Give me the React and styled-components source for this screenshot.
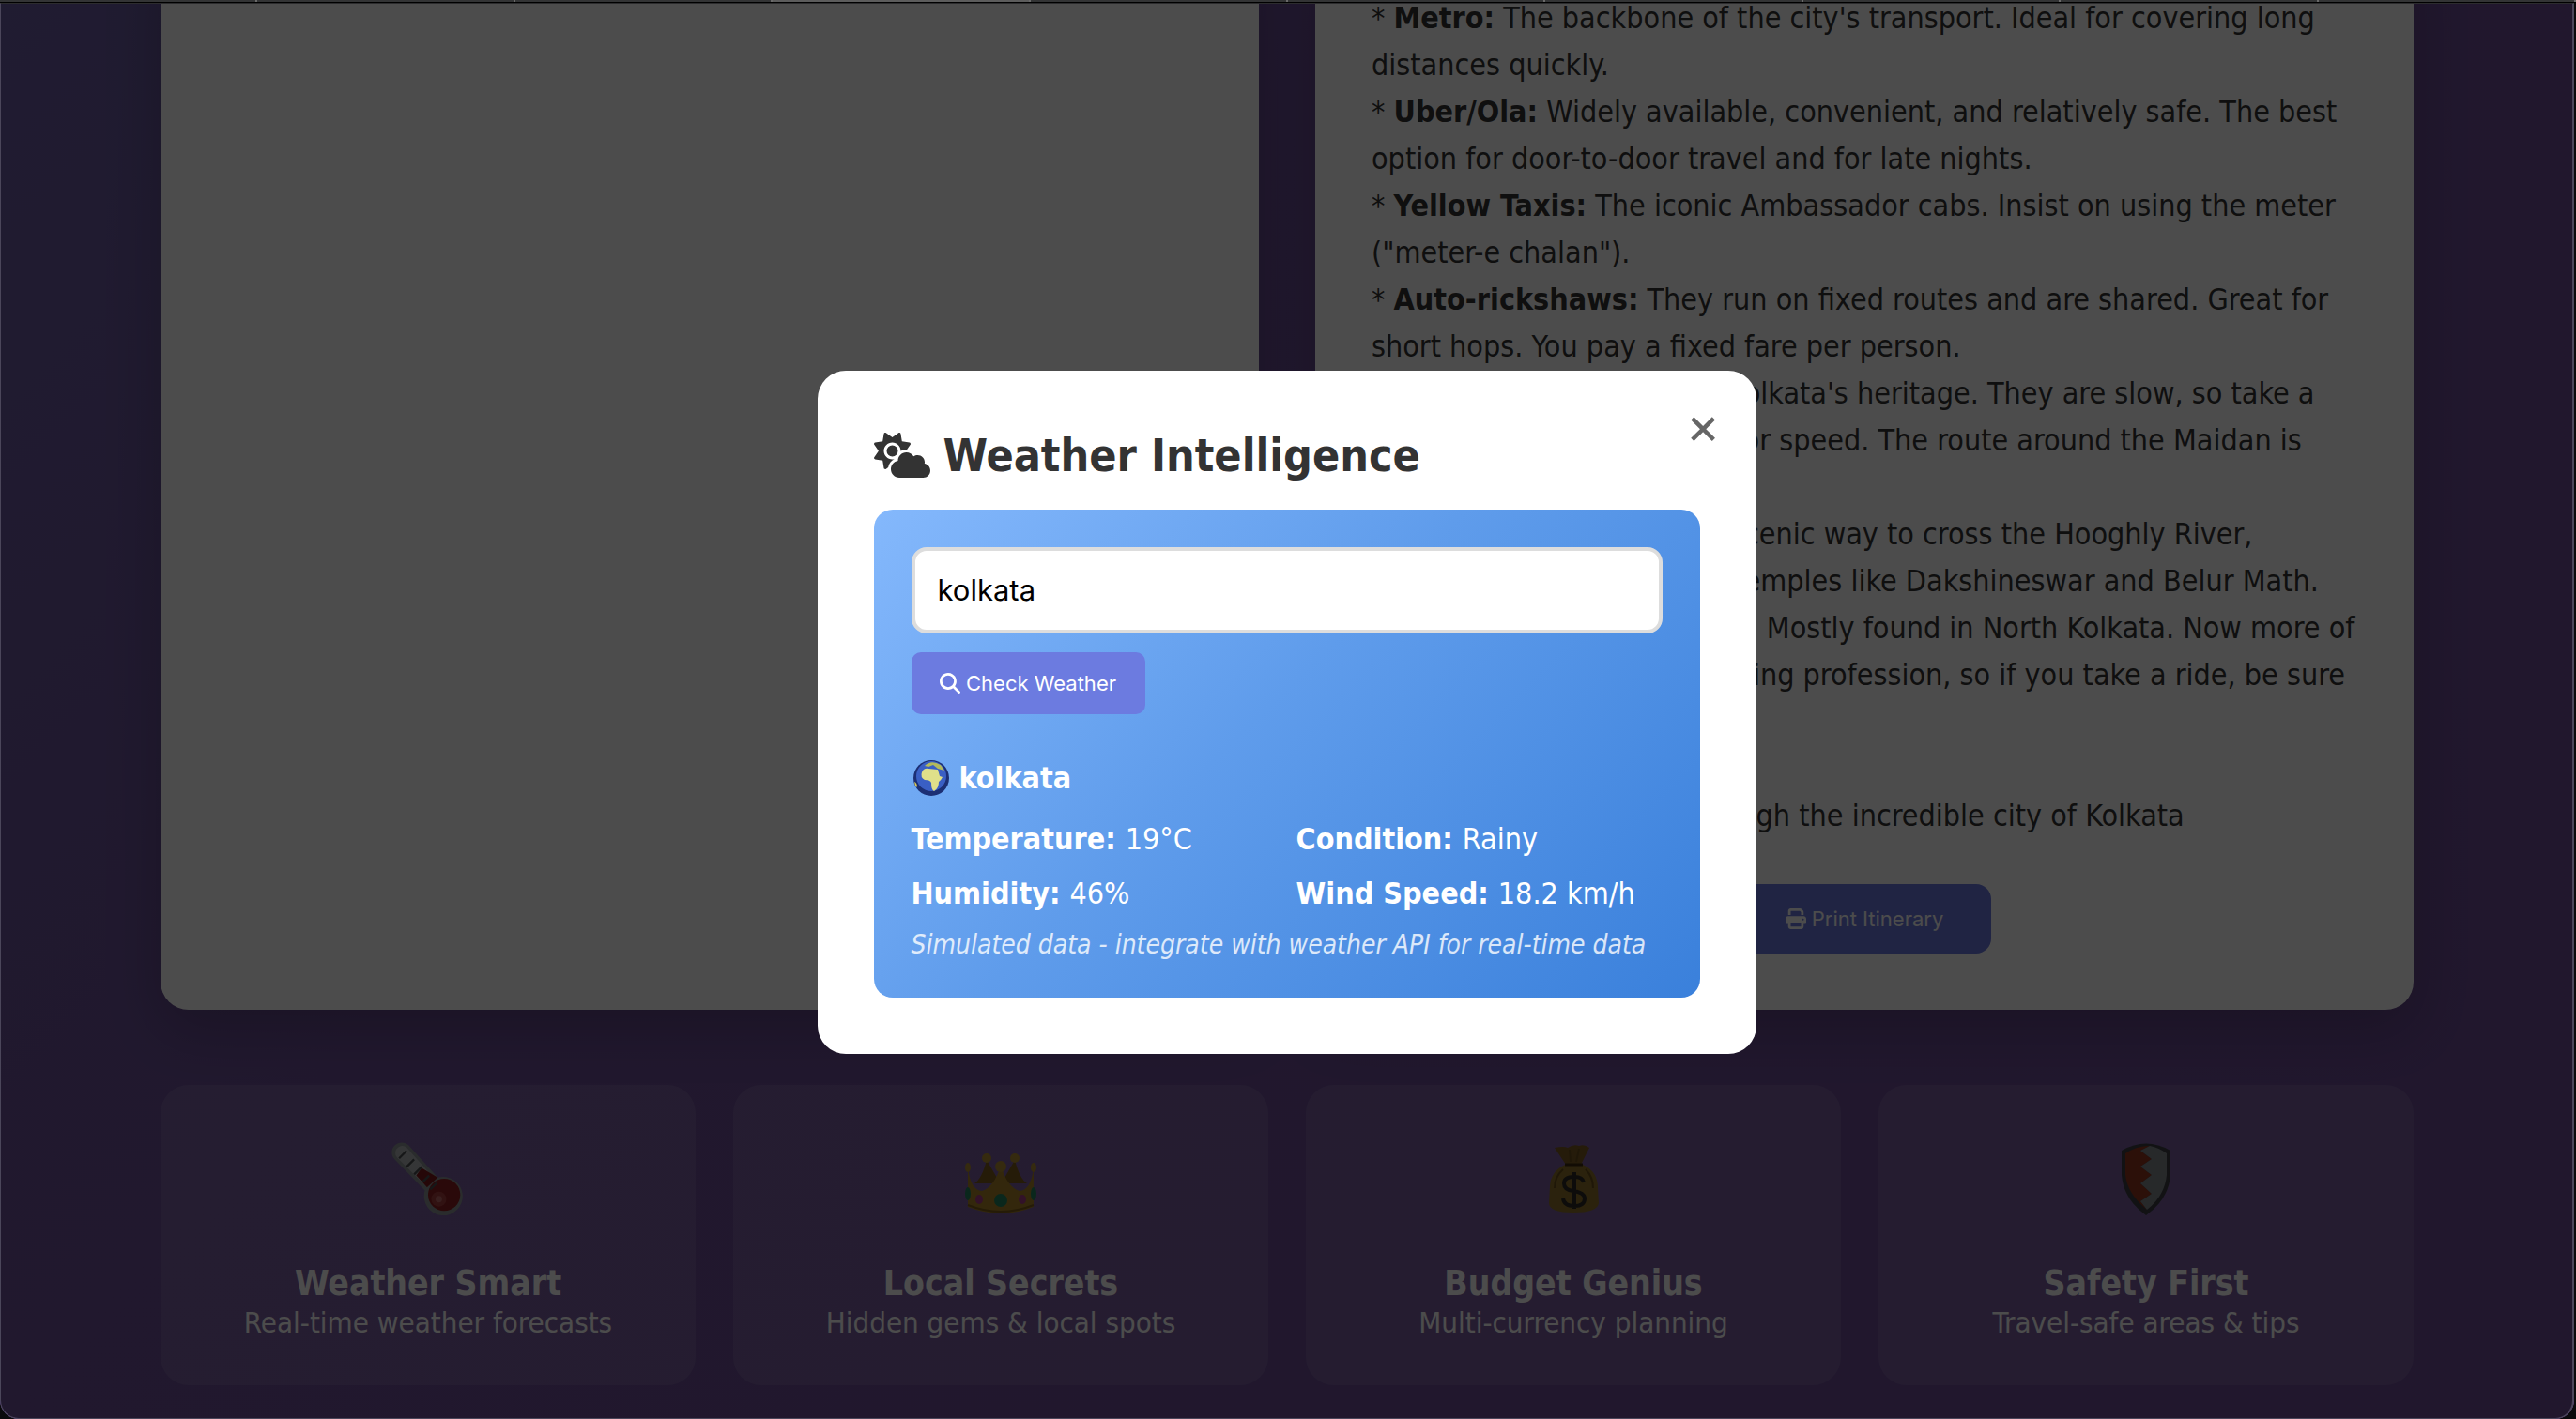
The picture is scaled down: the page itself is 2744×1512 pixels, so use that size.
import React from "react";
import styled, { createGlobalStyle } from "styled-components";
import { FaCloudSun, FaMagnifyingGlass, FaPrint } from "react-icons/fa6";

const textFont = `"DejaVu Sans Condensed", "Noto Sans", sans-serif`;
const controlFont = `Inter, "Liberation Sans", sans-serif`;

const GlobalStyle = createGlobalStyle`
  *, *::before, *::after { box-sizing: border-box; }
  html, body { margin: 0; background: #000; }
  h2, h3, h4, p, dl, dt, dd { margin: 0; }
  button, input { font-family: ${controlFont}; }
`;

const Window = styled.div`
  display: flex;
  flex-direction: column;
  height: 100vh;
  overflow: hidden;
  background: #0a0a0c;
  font-family: ${textFont};
  font-size: 32px;
  line-height: 38px;
  color: #333;
`;

const TabStrip = styled.div`
  display: flex;
  flex: none;
  height: 3px;
  border-bottom: 1px solid #000;
  background: #333435;
`;

const Tab = styled.span`
  flex: 1;
  border-right: 2px solid #6a6a6a;
  background: ${(p) => (p.$active ? "#5c5c5c" : "transparent")};
`;

const Viewport = styled.div`
  position: relative;
  display: flex;
  flex: 1;
  flex-direction: column;
  justify-content: flex-end;
  min-height: 0;
  margin-right: 2px;
  padding-bottom: 36px;
  overflow: hidden;
  border-radius: 0 0 20px 20px;
  background: linear-gradient(135deg, #6b5ea4 0%, #6e5099 35%, #6e4d97 100%);
`;

const Container = styled.main`
  display: flex;
  flex-direction: column;
  gap: 80px;
  width: 100%;
  max-width: 2400px;
  margin: 0 auto;
`;

const Columns = styled.div`
  display: grid;
  grid-template-columns: 1fr 1fr;
  gap: 60px;
`;

const Card = styled.section`
  display: flex;
  flex-direction: column;
  gap: 48px;
  align-items: center;
  padding: 60px;
  border-radius: 30px;
  background: #fff;
  box-shadow: 0 20px 60px rgba(0, 0, 0, 0.2);
`;

const Itinerary = styled.div`
  width: 100%;
  line-height: 50px;
  white-space: pre;
`;

const Line = styled.p`
  min-height: 50px;
`;

const ActionButton = styled.button`
  display: flex;
  align-items: center;
  justify-content: center;
  gap: 6px;
  width: ${(p) => (p.$large ? "270px" : "249px")};
  height: ${(p) => (p.$large ? "74px" : "66px")};
  border: 0;
  border-radius: ${(p) => (p.$large ? "16px" : "10px")};
  background: #6c7be0;
  color: #fff;
  font-size: 22px;
`;

const Features = styled.div`
  display: grid;
  grid-template-columns: repeat(4, 1fr);
  gap: 40px;
`;

const Feature = styled.article`
  display: flex;
  flex-direction: column;
  align-items: center;
  height: 320px;
  padding: 60px 40px 0;
  border-radius: 30px;
  background: rgba(255, 255, 255, 0.1);
  color: #fff;
  svg { width: 80px; height: 80px; margin-bottom: 50px; }
`;

const FeatureTitle = styled.h3`
  font-size: 37px;
  line-height: 44px;
`;

const FeatureText = styled.p`
  font-size: 31px;
`;

const Overlay = styled.div`
  position: absolute;
  inset: 0;
  display: flex;
  align-items: center;
  justify-content: center;
  padding-top: 2px;
  border: 1px solid #4b465a;
  border-top-color: #2c2c2e;
  border-right-width: 2px;
  border-radius: 0 0 20px 20px;
  background: rgba(0, 0, 0, 0.7);
`;

const Modal = styled.div`
  position: relative;
  width: 1000px;
  max-width: 90%;
  padding: 60px;
  border-radius: 30px;
  background: #fff;
`;

const CloseButton = styled.button`
  position: absolute;
  top: 26px;
  right: 38px;
  padding: 0;
  border: 0;
  background: none;
  color: #666;
  font-size: 56px;
  line-height: 64px;
`;

const ModalTitle = styled.h2`
  display: flex;
  align-items: center;
  gap: 14px;
  margin-bottom: 28px;
  font-size: 48px;
  line-height: 60px;
  svg { width: 60px; height: 48px; }
`;

const WeatherCard = styled.div`
  padding: 40px;
  border-radius: 20px;
  background: linear-gradient(135deg, #84b8fc 0%, #5f9ceb 45%, #3a80db 100%);
  color: #fff;
`;

const CityInput = styled.input`
  display: block;
  width: 100%;
  height: 92px;
  margin-bottom: 20px;
  padding: 0 24px;
  border: 4px solid #ddd;
  border-radius: 16px;
  background: #fff;
  color: #000;
  font-size: 31px;
`;

const City = styled.h4`
  display: flex;
  align-items: center;
  gap: 11px;
  margin: 48px 0 26px;
  font-size: 32px;
  line-height: 40px;
  svg { width: 40px; height: 40px; }
`;

const Readings = styled.dl`
  display: grid;
  grid-template-columns: 1fr 1fr;
  gap: 20px;
  margin-bottom: 20px;
`;

const Reading = styled.div`
  display: flex;
  gap: 10px;
  white-space: nowrap;
  dt { font-weight: bold; }
`;

const Note = styled.p`
  font-size: 28px;
  line-height: 32px;
  font-style: italic;
  white-space: nowrap;
  opacity: 0.8;
`;

const Thermometer = () => (
  <svg viewBox="6 6 70 70" aria-hidden="true">
    <path d="M10 10 a9 9 0 0 1 13 0 L50 40 A18 18 0 1 1 38 52 L10 23 a9 9 0 0 1 0-13z" fill="#8d9496" />
    <path d="M13 12 a6 6 0 0 1 8 0 L47 41 L40 49 L12 21 a6 6 0 0 1 1-9z" fill="#b3b6b8" />
    <path d="M35 31 L30 38 L40 49 L50 40z" fill="#7d1a1c" />
    <circle cx="56" cy="56" r="15" fill="#8e2022" />
    <circle cx="51" cy="60" r="7" fill="#a53c3c" />
    <circle cx="51" cy="60" r="3" fill="#c06a6a" />
    <path d="M14 22l7-7M21 30l7-7M28 37l7-7M36 44l6-6M43 51l6-6" stroke="#4b4f53" strokeWidth="2" />
  </svg>
);

const Crown = () => (
  <svg viewBox="0 0 80 80" aria-hidden="true">
    <path d="M12 45 Q20 40 25 20 L40 46 L55 20 Q60 40 68 45z" fill="#7d5a1c" />
    <path d="M5 29 Q8 52 20 53 Q33 49 40 26 Q47 49 60 53 Q72 52 75 29 L75 70 Q40 84 5 70z" fill="#ab842a" />
    <path d="M5 68 Q40 82 75 68" fill="none" stroke="#7c5c18" strokeWidth="2" />
    <g fill="#b18c32">
      <ellipse cx="5" cy="28" rx="3" ry="5" />
      <ellipse cx="75" cy="28" rx="3" ry="5" />
      <circle cx="25" cy="18" r="5" />
      <circle cx="55" cy="18" r="5" />
      <circle cx="40" cy="27" r="6" />
    </g>
    <g fill="#23845f">
      <circle cx="40" cy="63" r="7" />
      <ellipse cx="5" cy="56" rx="3" ry="7" />
      <ellipse cx="75" cy="56" rx="3" ry="7" />
    </g>
    <g fill="#a83c86">
      <ellipse cx="17" cy="62" rx="4" ry="5" />
      <ellipse cx="63" cy="62" rx="4" ry="5" />
    </g>
  </svg>
);

const MoneyBag = () => (
  <svg viewBox="0 0 80 80" aria-hidden="true">
    <path d="M20 7 Q30 5 34 7 Q40 3 46 5 Q52 3 57 7 L48 25 H32z" fill="#7d5c22" />
    <path d="M31 25 H50 Q66 32 66 50 L67 66 Q66 76 40 76 Q14 76 14 66 L15 48 Q16 32 31 25z" fill="#8f742c" />
    <path d="M31 25 H50" stroke="#3c2a10" strokeWidth="3" />
    <path d="M36 9 L37 22 M46 8 L43 22 M29 30 Q20 38 20 50 M53 30 Q61 38 61 50" fill="none" stroke="#6a4e1c" strokeWidth="2" />
    <path d="M51 44 Q50 38 41 38 Q30 38 30 45 Q30 52 40 53 Q52 55 52 61 Q52 69 41 69 Q30 69 29 61 M41 33 V72" fill="none" stroke="#2e2a26" strokeWidth="4" />
  </svg>
);

const Shield = () => (
  <svg viewBox="0 0 80 80" aria-hidden="true">
    <path d="M14 10 Q40-5 66 10 V36 Q64 62 40 79 Q16 62 14 36z" fill="#3c3f44" />
    <path d="M18 13 Q30 5 44 5 L34 10 L46 19 L34 27 L46 36 L34 45 L46 56 L34 64 L41 73 Q20 56 18 36z" fill="#93361f" />
    <path d="M44 5 Q54 7 62 13 V36 Q60 58 41 73 L34 64 L46 56 L34 45 L46 36 L34 27 L46 19 L34 10z" fill="#84898e" />
  </svg>
);

const Globe = () => (
  <svg viewBox="0 0 40 40" aria-hidden="true">
    <circle cx="21" cy="20" r="19" fill="#1c2f74" />
    <circle cx="21" cy="18" r="16" fill="#3a5fc4" />
    <path d="M11 14 Q13 9 18 10 L28 11 L30 18 L33 19 Q31 23 29 24 Q29 31 24 34 Q21 33 21 25 Q20 22 14 22 Q9 19 11 14z" fill="#dfe08a" />
    <path d="M14 7 Q21 0 31 6 L35 12 L28 10 L23 6 L18 8z" fill="#b3b95c" />
    <path d="M3 24 Q6 25 6 30 L4 28z" fill="#d8c95a" />
  </svg>
);

const lines = [
  ["Metro:", " The backbone of the city's transport. Ideal for covering long"],
  ["", "distances quickly."],
  ["Uber/Ola:", " Widely available, convenient, and relatively safe. The best"],
  ["", "option for door-to-door travel and for late nights."],
  ["Yellow Taxis:", " The iconic Ambassador cabs. Insist on using the meter"],
  ["", "(\"meter-e chalan\")."],
  ["Auto-rickshaws:", " They run on fixed routes and are shared. Great for"],
  ["", "short hops. You pay a fixed fare per person."],
  ["Trams:", " A classic part of Kolkata's heritage. They are slow, so take a"],
  ["", "trip for the adventure, not for speed. The route around the Maidan is"],
  ["", "scenic."],
  ["Ferries:", " A peaceful and scenic way to cross the Hooghly River,"],
  ["", "especially to visit the holy temples like Dakshineswar and Belur Math."],
  ["Hand-pulled Rickshaws:", " Mostly found in North Kolkata. Now more of"],
  ["", "a historical symbol and a dying profession, so if you take a ride, be sure"],
  ["", "to pay well."],
  ["", ""],
  ["", "So, enjoy your journey through the incredible city of Kolkata"],
];

const features = [
  [Thermometer, "Weather Smart", "Real-time weather forecasts"],
  [Crown, "Local Secrets", "Hidden gems & local spots"],
  [MoneyBag, "Budget Genius", "Multi-currency planning"],
  [Shield, "Safety First", "Travel-safe areas & tips"],
];

const readings = [
  ["Temperature:", "19°C"],
  ["Condition:", "Rainy"],
  ["Humidity:", "46%"],
  ["Wind Speed:", "18.2 km/h"],
];

export default function App() {
  return (
    <Window>
      <GlobalStyle />
      <TabStrip>
        {Array.from({ length: 10 }, (_, i) => <Tab key={i} $active={i === 3} />)}
      </TabStrip>
      <Viewport>
        <Container>
          <Columns>
            <Card />
            <Card>
              <Itinerary>
                {lines.map(([name, text], i) => (
                  <Line key={i}>
                    {name && <>* <strong>{name}</strong></>}
                    {text}
                  </Line>
                ))}
              </Itinerary>
              <ActionButton type="button" $large><FaPrint /> Print Itinerary</ActionButton>
            </Card>
          </Columns>
          <Features>
            {features.map(([Icon, title, text]) => (
              <Feature key={title}>
                <Icon />
                <FeatureTitle>{title}</FeatureTitle>
                <FeatureText>{text}</FeatureText>
              </Feature>
            ))}
          </Features>
        </Container>
        <Overlay>
          <Modal role="dialog" aria-labelledby="weather-title">
            <CloseButton type="button" aria-label="Close">×</CloseButton>
            <ModalTitle id="weather-title"><FaCloudSun /> Weather Intelligence</ModalTitle>
            <WeatherCard>
              <CityInput aria-label="City" defaultValue="kolkata" />
              <ActionButton type="button"><FaMagnifyingGlass /> Check Weather</ActionButton>
              <City><Globe /> kolkata</City>
              <Readings>
                {readings.map(([label, value]) => (
                  <Reading key={label}><dt>{label}</dt><dd>{value}</dd></Reading>
                ))}
              </Readings>
              <Note>Simulated data - integrate with weather API for real-time data</Note>
            </WeatherCard>
          </Modal>
        </Overlay>
      </Viewport>
    </Window>
  );
}
